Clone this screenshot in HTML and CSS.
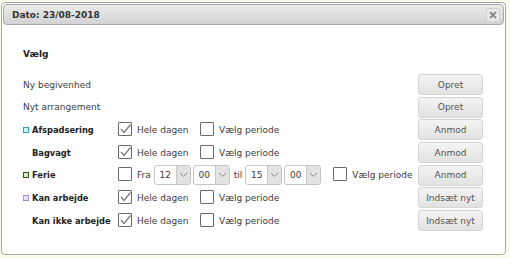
FILE: index.html
```html
<!DOCTYPE html>
<html lang="da">
<head>
  <meta charset="UTF-8" />
  <title>Dato: 23/08-2018</title>
  <link rel="stylesheet" href="styles.css">
</head>
<body>

  <div class="dialog">
    <div class="titlebar">
      <span class="title">Dato: 23/08-2018</span>
      <span class="close">
        <svg width="8" height="8" viewBox="0 0 8 8"><path d="M1 1 L7 7 M7 1 L1 7" stroke="#8a8a8a" stroke-width="2"/></svg>
      </span>
    </div>

    <div class="content">
      <p class="heading">Vælg</p>

      <div class="rows">
        <div class="label">Ny begivenhed</div>
        <div class="opts"></div>
        <button>Opret</button>

        <div class="label">Nyt arrangement</div>
        <div class="opts"></div>
        <button>Opret</button>

        <div class="label bold"><span class="mark teal"></span>Afspadsering</div>
        <div class="opts">
          <span class="opt"><span class="cb on"></span>Hele dagen</span>
          <span class="opt"><span class="cb"></span>Vælg periode</span>
        </div>
        <button>Anmod</button>

        <div class="label bold"><span class="mark none"></span>Bagvagt</div>
        <div class="opts">
          <span class="opt"><span class="cb on"></span>Hele dagen</span>
          <span class="opt"><span class="cb"></span>Vælg periode</span>
        </div>
        <button>Anmod</button>

        <div class="label bold"><span class="mark green"></span>Ferie</div>
        <div class="opts">
          <span class="cb"></span><span class="word">Fra</span>
          <span class="sel"><span>12</span><i></i></span>
          <span class="sel"><span>00</span><i></i></span>
          <span class="word til">til</span>
          <span class="sel"><span>15</span><i></i></span>
          <span class="sel"><span>00</span><i></i></span>
          <span class="cb late"></span><span class="word">Vælg periode</span>
        </div>
        <button>Anmod</button>

        <div class="label bold"><span class="mark purple"></span>Kan arbejde</div>
        <div class="opts">
          <span class="opt"><span class="cb on"></span>Hele dagen</span>
          <span class="opt"><span class="cb"></span>Vælg periode</span>
        </div>
        <button>Indsæt nyt</button>

        <div class="label bold"><span class="mark none"></span>Kan ikke arbejde</div>
        <div class="opts">
          <span class="opt"><span class="cb on"></span>Hele dagen</span>
          <span class="opt"><span class="cb"></span>Vælg periode</span>
        </div>
        <button>Indsæt nyt</button>
      </div>
    </div>
  </div>

</body>
</html>
```

FILE: styles.css
```css
body {
  margin: 0;
  padding: 2px 4px 3px 1px;
  background: #fdfce8;
  font-family: 'DejaVu Sans', Verdana, sans-serif;
  font-size: 9px;
  color: #3c3c3c;
}
.dialog {
  height: 249px;
  padding: 1px;
  background: #fff;
  border: 1px solid #a8a8a8;
  border-radius: 4px;
}
.titlebar {
  height: 19px;
  display: flex;
  align-items: center;
  justify-content: space-between;
  padding: 0 3px 0 8px;
  background: linear-gradient(to bottom, #ececec, #d2d2d2);
  border: 1px solid #aaa;
  border-radius: 4px;
}
.title {
  font-weight: bold;
  color: #333;
}
.close {
  width: 12px;
  height: 12px;
  display: flex;
  align-items: center;
  justify-content: center;
  background: #eaeaea;
  border: 1px solid #d0d0d0;
  border-radius: 2px;
}
.content {
  padding: 23px 21px 0 20px;
}
.heading {
  margin: 0 0 14px;
  line-height: 12px;
  font-weight: bold;
  color: #222;
}
.rows {
  display: grid;
  grid-template-columns: 95px minmax(0, 1fr) 65px;
  grid-auto-rows: 21px;
  row-gap: 1.7px;
  align-items: center;
}
.label {
  display: flex;
  align-items: center;
  white-space: nowrap;
  color: #3c3c3c;
}
.label.bold {
  font-size: 8.3px;
  font-weight: bold;
  color: #222;
}
.mark {
  width: 4px;
  height: 4px;
  margin-right: 3px;
  border: 1.5px solid transparent;
}
.mark.teal { border-color: #2fa6bd; background: #cdeff5; }
.mark.green { border-color: #2f5a14; background: #d2e8c2; }
.mark.purple { border-color: #a187d8; background: #ebe3fa; }
.opts {
  display: flex;
  align-items: center;
  height: 100%;
  white-space: nowrap;
}
.opt {
  width: 82px;
  display: flex;
  align-items: center;
}
.cb {
  flex: none;
  width: 12px;
  height: 12px;
  margin: -2px 5px 0 0;
  border: 1px solid #6a6a6a;
  border-radius: 1px;
  background: #fff;
}
.cb.on {
  background: #fff url("data:image/svg+xml;utf8,<svg xmlns='http://www.w3.org/2000/svg' width='12' height='12'><polyline points='2,6 5,9.5 11.5,1.5' fill='none' stroke='%23777' stroke-width='1.2'/></svg>") no-repeat center;
}
.cb.late {
  margin-left: 10px;
}
.word {
  margin-right: 3px;
}
.til {
  margin-left: 2px;
  margin-right: 3px;
}
.sel {
  flex: none;
  display: flex;
  width: 35px;
  height: 18px;
  margin-right: 2px;
  border: 1px solid #c4c4c4;
  border-radius: 3px;
  background: #fff;
  overflow: hidden;
}
.sel span {
  flex: 1;
  display: flex;
  align-items: center;
  justify-content: center;
}
.sel i {
  width: 13px;
  background: #e2e2e2 url("data:image/svg+xml;utf8,<svg xmlns='http://www.w3.org/2000/svg' width='9' height='6'><polyline points='1,1 4.5,4.5 8,1' fill='none' stroke='%23888' stroke-width='1'/></svg>") no-repeat center;
  border-left: 1px solid #c8c8c8;
}
button {
  height: 21px;
  padding: 0;
  font-family: inherit;
  font-size: 9px;
  color: #555;
  background: linear-gradient(to bottom, #f4f4f4, #e2e2e2);
  border: 1px solid #d4d4d4;
  border-radius: 3px;
}
```
